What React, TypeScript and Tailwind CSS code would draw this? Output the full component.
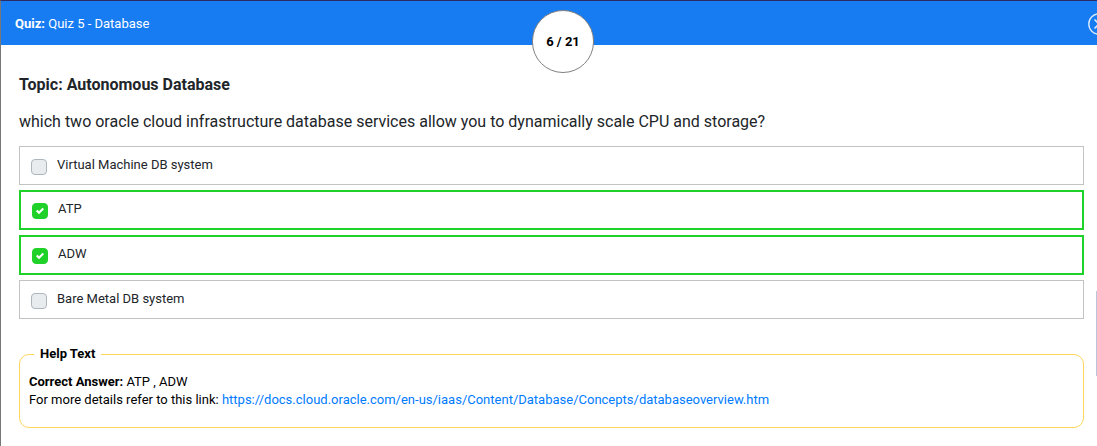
import { useState } from "react";

type Option = { id: string; label: string; correct: boolean };

const options: Option[] = [
  { id: "vm", label: "Virtual Machine DB system", correct: false },
  { id: "atp", label: "ATP", correct: true },
  { id: "adw", label: "ADW", correct: true },
  { id: "bm", label: "Bare Metal DB system", correct: false },
];

const docsUrl =
  "https://docs.cloud.oracle.com/en-us/iaas/Content/Database/Concepts/databaseoverview.htm";

function Header() {
  return (
    <header className="relative flex h-11 items-center justify-between bg-[#177bf2] pt-0.5 pl-[14px] text-[13px] text-white">
      <h1 className="leading-5">
        <b>Quiz:</b> Quiz 5 - Database
      </h1>
      <button type="button" aria-label="Close quiz" className="-mr-[13px] shrink-0">
        <svg viewBox="0 0 22 22" className="size-[22px]" fill="none" stroke="#d5e8ff">
          <circle cx="11" cy="11" r="10.2" strokeWidth="1.4" />
          <path d="M6.5 6.5l9 9M15.5 6.5l-9 9" strokeWidth="1.6" />
        </svg>
      </button>
      <div className="absolute top-[9px] left-1/2 -ml-[17px] flex h-[63px] w-[62px] items-center justify-center rounded-full border border-[#808080] bg-white font-bold text-black">
        6 / 21
      </div>
    </header>
  );
}

function OptionRow({ option }: { option: Option }) {
  const [checked, setChecked] = useState(option.correct);
  return (
    <li>
      <label
        className={
          option.correct
            ? "flex h-10 items-start border-2 border-[#1fd128] px-[11px] pt-[7px]"
            : "flex h-[39px] items-start border border-[#c3c3c3] px-[11px] pt-[8px]"
        }
      >
        <span className="mt-1 grid size-4 shrink-0">
          <input
            type="checkbox"
            checked={checked}
            onChange={() => setChecked(!checked)}
            className="col-start-1 row-start-1 size-4 appearance-none rounded border border-[#adb5bd] bg-[#e9ecef] checked:border-[#1fd128] checked:bg-[#1fd128]"
          />
          {checked && (
            <svg viewBox="0 0 8 8" className="pointer-events-none col-start-1 row-start-1 size-2 place-self-center">
              <path fill="#fff" d="M6.564.75l-3.59 3.612-1.538-1.55L0 4.26l2.974 2.99L8 2.193z" />
            </svg>
          )}
        </span>
        <span className="ml-[10px] text-[13px] leading-5 text-[#212529]">{option.label}</span>
      </label>
    </li>
  );
}

export default function App() {
  return (
    <div className="min-h-screen overflow-hidden border-t border-l border-t-[#2b2a63] border-l-[#777777] bg-white font-[Roboto,sans-serif]">
      <Header />
      <div className="flex">
        <main className="min-w-0 grow pr-3 pl-[18px] pt-7">
          <h2 className="text-base leading-6 font-bold text-[#212529]">Topic: Autonomous Database</h2>
          <p className="mt-[13px] text-base leading-6 text-[#212529]">
            which two oracle cloud infrastructure database services allow you to dynamically scale CPU and storage?
          </p>
          <ul className="mt-3 flex flex-col gap-[5px]">
            {options.map((option) => (
              <OptionRow key={option.id} option={option} />
            ))}
          </ul>
          <fieldset className="mt-[25px] rounded-[10px] border border-[#ffd65c] px-[9px] pb-[18px] text-[13px] leading-[18px] text-black">
            <legend className="ml-[5px] px-[6px] leading-5 font-bold">Help Text</legend>
            <p className="mt-[9px]">
              <b>Correct Answer:</b> ATP , ADW
            </p>
            <p>
              For more details refer to this link:{" "}
              <a href={docsUrl} className="text-[#007bff]">
                {docsUrl}
              </a>
            </p>
          </fieldset>
        </main>
        <div className="mt-[246px] h-[85px] w-px shrink-0 bg-[#b8c7dc]" />
      </div>
    </div>
  );
}
